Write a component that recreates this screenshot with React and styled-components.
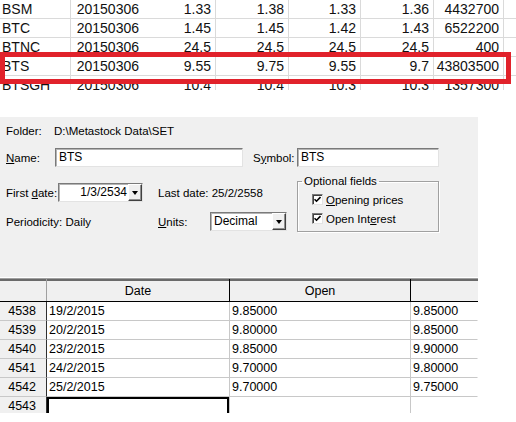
import React from "react";
import styled, { createGlobalStyle } from "styled-components";

const GlobalStyle = createGlobalStyle`
  html, body {
    margin: 0;
    padding: 0;
    background: #fff;
  }
  body {
    font-family: "Liberation Sans", Arial, sans-serif;
    color: #000;
  }
`;

const Page = styled.div`
  width: 516px;
  height: 422px;
  overflow: hidden;
  background: #fff;
`;

/* ---------- spreadsheet strip at the top ---------- */

const Sheet = styled.div`
  position: relative;
  height: 90px;
  overflow: hidden;
`;

const SheetRow = styled.div`
  display: grid;
  grid-template-columns: 71px 73px 72px 73px 72px 73px 70px;
  height: 19px;
  box-sizing: border-box;
  border-bottom: 1px solid #dadada;
`;

const SheetCell = styled.div`
  box-sizing: border-box;
  padding: ${(p) => (p.$num ? "1px 4px 0 0" : "1px 0 0 2px")};
  text-align: ${(p) => (p.$num ? "right" : "left")};
  border-right: 1px solid ${(p) => (p.$noLine ? "transparent" : "#dadada")};
  font-size: 14px;
  line-height: 17px;
  color: #111;
  white-space: nowrap;
`;

const Highlight = styled.div`
  position: absolute;
  left: 0;
  top: 52px;
  width: 511px;
  height: 32px;
  box-sizing: border-box;
  border: 5px solid #e1222b;
`;

/* ---------- security dialog ---------- */

const Dialog = styled.div`
  width: 478px;
  height: 160px;
  margin-top: 27px;
  padding-left: 6px;
  box-sizing: border-box;
  background: #f0f0f0;
  font-size: 11.5px;
`;

const Line = styled.div`
  display: flex;
  align-items: center;
  height: ${(p) => p.$h || 19}px;
  margin-top: ${(p) => p.$mt || 0}px;
`;

const Label = styled.div`
  width: ${(p) => p.$w}px;
  margin-left: ${(p) => p.$ml || 0}px;
  flex-shrink: 0;
  white-space: nowrap;
`;

const Sunken = styled.div`
  box-sizing: border-box;
  width: ${(p) => p.$w}px;
  height: 19px;
  background: #fff;
  border: 1px solid;
  border-color: #7a7a7a #e3e3e3 #e3e3e3 #7a7a7a;
  box-shadow: inset 1px 1px 0 #b4b4b4;
  flex-shrink: 0;
`;

const TextBox = styled(Sunken)`
  padding-left: 3px;
  font-size: 12px;
  line-height: 17px;
`;

const Combo = styled(Sunken)`
  display: flex;
`;

const ComboText = styled.div`
  flex: 1;
  text-align: ${(p) => p.$align || "left"};
  padding: 0 ${(p) => (p.$align === "right" ? "1px" : "0")} 0 3px;
  font-size: 12px;
  line-height: 17px;
`;

const DropButton = styled.div`
  width: 14px;
  box-sizing: border-box;
  background: #f0f0f0;
  border: 1px solid;
  border-color: #fff #404040 #404040 #fff;
  box-shadow: inset -1px -1px 0 #909090;
  display: flex;
  align-items: center;
  justify-content: center;
`;

const Arrow = styled.span`
  width: 0;
  height: 0;
  border-left: 3.5px solid transparent;
  border-right: 3.5px solid transparent;
  border-top: 4px solid #000;
  margin-top: 1px;
`;

const Lower = styled.div`
  display: flex;
  margin-top: 8px;
`;

const LeftCol = styled.div`
  width: 291px;
  padding-top: 8px;
`;

const Group = styled.fieldset`
  margin: 0;
  padding: 0;
  min-width: 0;
  width: 142px;
  height: 57px;
  box-sizing: border-box;
  border: 1px solid #a0a0a0;
  box-shadow: 1px 1px 0 #fff, inset 1px 1px 0 #fff;
`;

const Legend = styled.legend`
  margin-left: 4px;
  padding: 0 2px;
  font-size: 11.5px;
  line-height: 13px;
`;

const CheckLine = styled.div`
  display: flex;
  align-items: center;
  height: 19px;
  margin-left: 14px;
  margin-top: ${(p) => p.$mt || 0}px;
  gap: 3px;
`;

const CheckBox = styled.span`
  width: 11px;
  height: 11px;
  box-sizing: border-box;
  background: #fff;
  border: 1px solid;
  border-color: #7a7a7a #e3e3e3 #e3e3e3 #7a7a7a;
  box-shadow: inset 1px 1px 0 #404040;
  display: inline-flex;
  align-items: center;
  justify-content: center;
`;

/* ---------- data grid at the bottom ---------- */

const Grid = styled.div`
  width: 478px;
  height: 136px;
  overflow: hidden;
  border-top: 1px solid #fff;
  box-sizing: border-box;
`;

const columns = "47px 183px 181px 67px";

const HeadRow = styled.div`
  display: grid;
  grid-template-columns: ${columns};
  height: 24px;
  box-sizing: border-box;
  background: #f0f0f0;
  border-top: 1px solid #a0a0a0;
  border-bottom: 1px solid #000;
  box-shadow: inset 0 2px 0 #6a6a6a;
`;

const HeadCell = styled.div`
  box-sizing: border-box;
  padding-top: 2px;
  text-align: center;
  font-size: 12.5px;
  line-height: 20px;
  border-right: 1px solid ${(p) => p.$line || "transparent"};
`;

const DataRow = styled.div`
  display: grid;
  grid-template-columns: ${columns};
  height: 19px;
`;

const RowNum = styled.div`
  box-sizing: border-box;
  background: #f0f0f0;
  border-right: 1px solid #303030;
  border-bottom: 1px solid #c8c8c8;
  padding-right: 10px;
  text-align: right;
  font-size: 12.5px;
  line-height: 18px;
`;

const DataCell = styled.div`
  box-sizing: border-box;
  background: #fff;
  border-right: 1px solid ${(p) => (p.$last ? "transparent" : "#c8c8c8")};
  border-bottom: 1px solid #c8c8c8;
  padding-left: 2px;
  font-size: 12.5px;
  line-height: 18px;
  box-shadow: ${(p) => (p.$selected ? "inset 0 0 0 2px #000" : "none")};
`;

const sheetRows = [
  ["BSM", "20150306", "1.33", "1.38", "1.33", "1.36", "4432700"],
  ["BTC", "20150306", "1.45", "1.45", "1.42", "1.43", "6522200"],
  ["BTNC", "20150306", "24.5", "24.5", "24.5", "24.5", "400"],
  ["BTS", "20150306", "9.55", "9.75", "9.55", "9.7", "43803500"],
  ["BTSGH", "20150306", "10.4", "10.4", "10.3", "10.3", "1357300"],
];

const gridRows = [
  ["4538", "19/2/2015", "9.85000", "9.85000"],
  ["4539", "20/2/2015", "9.80000", "9.85000"],
  ["4540", "23/2/2015", "9.85000", "9.90000"],
  ["4541", "24/2/2015", "9.70000", "9.80000"],
  ["4542", "25/2/2015", "9.70000", "9.75000"],
];

function Check() {
  return (
    <CheckBox>
      <svg width="7" height="7" viewBox="0 0 7 7">
        <polyline
          points="0.5,3.2 2.5,5.2 6.5,1"
          fill="none"
          stroke="#000"
          strokeWidth="1.6"
        />
      </svg>
    </CheckBox>
  );
}

function App() {
  return (
    <Page>
      <GlobalStyle />
      <Sheet>
        {sheetRows.map((row) => (
          <SheetRow key={row[0]}>
            {row.map((v, i) => (
              <SheetCell key={i} $num={i > 0} $noLine={i === 1}>
                {v}
              </SheetCell>
            ))}
          </SheetRow>
        ))}
        <Highlight />
      </Sheet>

      <Dialog>
        <Line $h={28}>
          <Label $w={48}>Folder:</Label>
          <div>D:\Metastock Data\SET</div>
        </Line>
        <Line $mt={3}>
          <Label $w={49}>
            <u>N</u>ame:
          </Label>
          <TextBox $w={188}>BTS</TextBox>
          <Label $w={44} $ml={10}>
            S<u>y</u>mbol:
          </Label>
          <TextBox $w={142}>BTS</TextBox>
        </Line>
        <Lower>
          <LeftCol>
            <Line>
              <Label $w={52}>
                First <u>d</u>ate:
              </Label>
              <Combo $w={85}>
                <ComboText $align="right">1/3/2534</ComboText>
                <DropButton>
                  <Arrow />
                </DropButton>
              </Combo>
              <Label $w={120} $ml={15}>
                Last date: 25/2/2558
              </Label>
            </Line>
            <Line $mt={10}>
              <Label $w={152}>Periodicity: Daily</Label>
              <Label $w={52}>
                <u>U</u>nits:
              </Label>
              <Combo $w={77}>
                <ComboText>Decimal</ComboText>
                <DropButton>
                  <Arrow />
                </DropButton>
              </Combo>
            </Line>
          </LeftCol>
          <Group>
            <Legend>Optional fields</Legend>
            <CheckLine $mt={2}>
              <Check />
              <span>
                <u>O</u>pening prices
              </span>
            </CheckLine>
            <CheckLine>
              <Check />
              <span>
                Open Int<u>e</u>rest
              </span>
            </CheckLine>
          </Group>
        </Lower>
      </Dialog>

      <Grid>
        <HeadRow>
          <HeadCell $line="#a0a0a0" />
          <HeadCell $line="#000">Date</HeadCell>
          <HeadCell $line="#000">Open</HeadCell>
          <HeadCell />
        </HeadRow>
        {gridRows.map((r) => (
          <DataRow key={r[0]}>
            <RowNum>{r[0]}</RowNum>
            <DataCell>{r[1]}</DataCell>
            <DataCell>{r[2]}</DataCell>
            <DataCell $last>{r[3]}</DataCell>
          </DataRow>
        ))}
        <DataRow>
          <RowNum>4543</RowNum>
          <DataCell $selected />
          <DataCell />
          <DataCell $last />
        </DataRow>
      </Grid>
    </Page>
  );
}

export default App;
